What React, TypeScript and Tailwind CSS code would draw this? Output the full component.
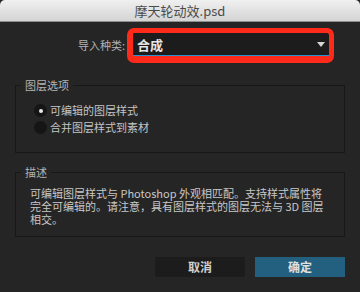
import React from "react";

export default function App() {
  const font = { fontFamily: '"Noto Sans CJK SC", "Noto Sans", sans-serif' };
  return (
    <div
      className="w-[360px] h-[292px] bg-[#252525] flex flex-col overflow-hidden"
      style={font}
    >
      {/* Title bar */}
      <div className="h-[22px] shrink-0 rounded-t-[5px] bg-gradient-to-b from-[#f0f0f0] to-[#d4d4d4] border-b border-[#8e8e8e] flex items-center justify-center">
        <span className="text-[13px] leading-none text-[#4b4b4b]">摩天轮动效.psd</span>
      </div>

      {/* Import type row */}
      <div className="flex items-center mt-[6px] pl-[76px]">
        <span className="text-[11px] leading-none text-[#b4b4b4] w-[49px] text-right mr-[2px]">导入种类:</span>
        <div className="w-[207px] h-[35px] border-[6px] border-r-[5px] border-b-[7px] border-t-[5px] border-[#ff2a1a] rounded-[7px] bg-[#1c1c1c]">
          <div className="h-full flex items-center justify-between border-b border-[#2b8fd0] pl-[4px] pr-[4px]">
            <span className="text-[13px] leading-none font-bold text-[#e6e6e6]">合成</span>
            <span className="w-0 h-0 border-l-[4px] border-r-[4px] border-t-[5px] border-l-transparent border-r-transparent border-t-[#d6d6d6]" />
          </div>
        </div>
      </div>

      {/* Layer options */}
      <div className="relative mx-[15px] mt-[22px] border border-[#171717]">
        <span className="absolute left-[5px] top-[-8px] px-[4px] bg-[#252525] text-[11px] leading-[14px] text-[#b4b4b4]">图层选项</span>
        <div className="flex flex-col pl-[18px] pt-[16px] pb-[16px]">
          <label className="flex items-center h-[17px]">
            <span className="w-[13px] h-[13px] rounded-full bg-[#151515] flex items-center justify-center mr-[3px]">
              <span className="w-[4px] h-[4px] rounded-full bg-[#e8e8e8]" />
            </span>
            <span className="text-[11px] leading-none text-[#c4c4c4]">可编辑的图层样式</span>
          </label>
          <label className="flex items-center h-[17px]">
            <span className="w-[13px] h-[13px] rounded-full bg-[#151515] mr-[3px]" />
            <span className="text-[11px] leading-none text-[#c4c4c4]">合并图层样式到素材</span>
          </label>
        </div>
      </div>

      {/* Description */}
      <div className="relative mx-[15px] mt-[19px] border border-[#171717]">
        <span className="absolute left-[5px] top-[-8px] px-[4px] bg-[#252525] text-[11px] leading-[14px] text-[#b4b4b4]">描述</span>
        <p className="pl-[14px] pt-[14px] pb-[10px] text-[11px] leading-[13px] text-[#c8c8c8] whitespace-nowrap">
          可编辑图层样式与 Photoshop 外观相匹配。支持样式属性将
          <br />
          完全可编辑的。请注意，具有图层样式的图层无法与 3D 图层
          <br />
          相交。
        </p>
      </div>

      {/* Buttons */}
      <div className="flex justify-end gap-[10px] mt-[20px] pr-[15px]">
        <button className="w-[90px] h-[20px] bg-[#1c1c1c] text-[12px] leading-none font-bold text-[#d0d0d0]">取消</button>
        <button className="w-[90px] h-[20px] bg-[#23607f] text-[12px] leading-none font-bold text-[#e0e0e0]">确定</button>
      </div>
    </div>
  );
}
